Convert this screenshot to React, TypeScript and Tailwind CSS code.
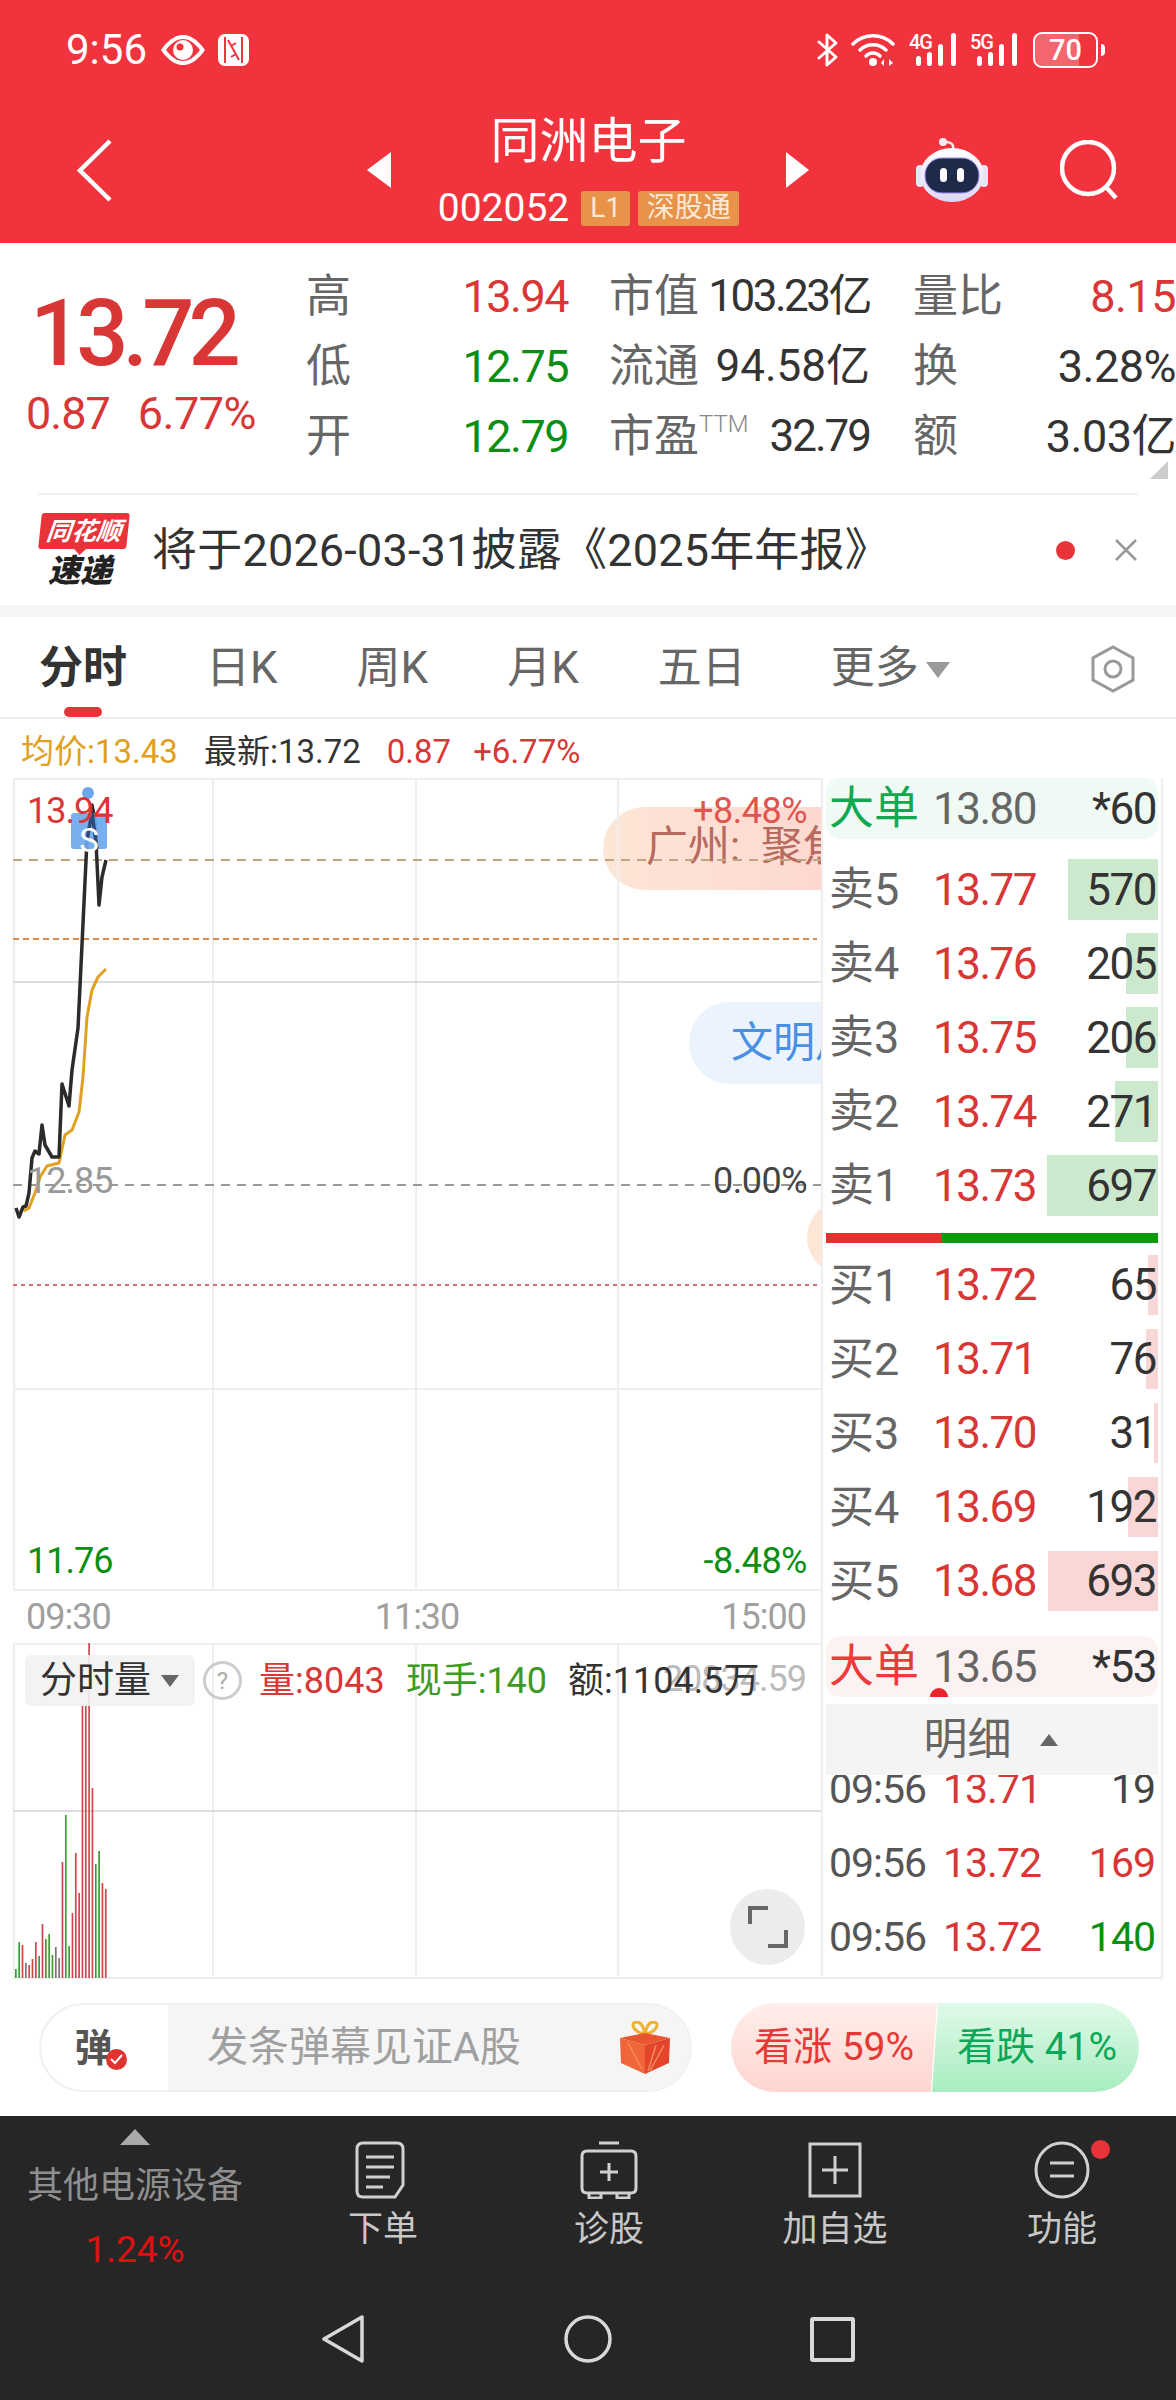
import React from 'react';

const FONT = "[font-family:Roboto,'Noto_Sans_CJK_SC',sans-serif]";

const stats = [
  { a: '高', av: '13.94', ac: 'text-[#d93636]', b: '市值', bv: '103.23亿', bt: 'tracking-[-2.5px]', c: '量比', cv: '8.15', cc: 'text-[#d93636]' },
  { a: '低', av: '12.75', ac: 'text-[#0a8f14]', b: '流通', bv: '94.58亿', bt: 'tracking-normal', c: '换', cv: '3.28%', cc: 'text-[#333]' },
  { a: '开', av: '12.79', ac: 'text-[#0a8f14]', b: '市盈', bv: '32.79', bt: 'tracking-[-2px]', c: '额', cv: '3.03亿', cc: 'text-[#333]', ttm: true },
];

const sells = [
  { label: '卖5', price: '13.77', qty: '570', bar: 90 },
  { label: '卖4', price: '13.76', qty: '205', bar: 32 },
  { label: '卖3', price: '13.75', qty: '206', bar: 32 },
  { label: '卖2', price: '13.74', qty: '271', bar: 43 },
  { label: '卖1', price: '13.73', qty: '697', bar: 111 },
];

const buys = [
  { label: '买1', price: '13.72', qty: '65', bar: 10 },
  { label: '买2', price: '13.71', qty: '76', bar: 12 },
  { label: '买3', price: '13.70', qty: '31', bar: 4 },
  { label: '买4', price: '13.69', qty: '192', bar: 30 },
  { label: '买5', price: '13.68', qty: '693', bar: 110 },
];

const ticks = [
  { time: '09:56', price: '13.71', qty: '19', color: 'text-[#444]' },
  { time: '09:56', price: '13.72', qty: '169', color: 'text-[#d93636]' },
  { time: '09:56', price: '13.72', qty: '140', color: 'text-[#0a8f14]' },
];

const priceLine =
  '16,1208 19,1217 23,1207 26,1206 29,1193 32,1158 35,1151 39,1154 42,1125 45,1145 52,1157 59,1157 62,1084 69,1106 72,1070 78,1028 87,840 92,805 95,820 99,905 102,877 106,860';
const avgLine =
  '24,1211 29,1208 35,1193 40,1177 47,1166 59,1163 65,1135 72,1130 79,1112 83,1077 87,1017 92,990 98,977 106,969';

// [colour, top y] from left to right
const volumes: [string, number][] = [
  ['g', 1969], ['g', 1942], ['r', 1945], ['n', 1963], ['r', 1965], ['r', 1959], ['r', 1942],
  ['g', 1956], ['r', 1924], ['g', 1939], ['g', 1934], ['g', 1955], ['n', 1947], ['n', 1958],
  ['r', 1862], ['g', 1815], ['g', 1946], ['r', 1913], ['r', 1853], ['r', 1893], ['r', 1706],
  ['r', 1706], ['r', 1643], ['r', 1788], ['g', 1864], ['g', 1851], ['r', 1883], ['r', 1889],
];
const volColor: Record<string, string> = { g: '#3f9a35', r: '#cf4650', n: '#777777' };

function StatusIcons() {
  return (
    <div className="flex items-center">
      <svg width="22" height="34" viewBox="0 0 22 34" fill="none" stroke="#fff" strokeWidth="3" strokeLinecap="round" strokeLinejoin="round">
        <path d="M2 9 L19 24 L10 32 L10 2 L19 10 L2 25" />
      </svg>
      <svg className="ml-[12px]" width="46" height="34" viewBox="0 0 46 34" fill="none" stroke="#fff" strokeWidth="3.5" strokeLinecap="round">
        <path d="M2 11 C13 0 31 0 42 11" />
        <path d="M9 17 C16 10 28 10 35 17" />
        <path d="M15 23 C19 19 25 19 29 23" />
        <circle cx="22" cy="29" r="4" fill="#fff" stroke="none" />
        <path d="M33 26 L30 30 L33 33 Z M38 26 L42 30 L38 33 Z" fill="#fff" stroke="none" />
      </svg>
      <Signal label="4G" className="ml-[12px]" />
      <Signal label="5G" className="ml-[11px]" />
      <div className="relative ml-[13px] flex h-[36px] w-[65px] items-center justify-center overflow-hidden rounded-[9px] border-[2px] border-white">
        <div className="absolute left-0 top-0 h-full w-[44px] bg-white/25" />
        <span className="relative text-[29px] font-medium leading-none text-white">70</span>
      </div>
      <div className="ml-[3px] h-[12px] w-[4px] rounded-r-sm bg-white" />
    </div>
  );
}

function Signal({ label, className }: { label: string; className: string }) {
  return (
    <svg className={className} width="50" height="34" viewBox="0 0 50 34" fill="#fff">
      <text x="0" y="16" fontSize="20" fontWeight="500" letterSpacing="-1" fontFamily="Roboto, sans-serif">{label}</text>
      <rect x="7" y="23" width="5" height="10" rx="2.5" />
      <rect x="18" y="19" width="5" height="14" rx="2.5" />
      <rect x="29" y="11" width="5" height="22" rx="2.5" />
      <rect x="42" y="0" width="5" height="33" rx="2.5" />
    </svg>
  );
}

function Robot() {
  return (
    <svg width="72" height="66" viewBox="0 0 72 66">
      <defs>
        <linearGradient id="shell" x1="0" y1="0" x2="0" y2="1">
          <stop offset="0" stopColor="#ffffff" />
          <stop offset="1" stopColor="#dcd8f5" />
        </linearGradient>
      </defs>
      <path d="M37 12 C38 7 35 5 29 5" fill="none" stroke="#f3e9ee" strokeWidth="2.5" />
      <circle cx="27" cy="5" r="4" fill="#f6eef1" />
      <rect x="0" y="28" width="8" height="22" rx="4" fill="#e9e5f5" />
      <rect x="64" y="28" width="8" height="22" rx="4" fill="#e9e5f5" />
      <ellipse cx="36" cy="38" rx="32" ry="27" fill="url(#shell)" />
      <rect x="9" y="21" width="54" height="35" rx="17" fill="#1e2a4a" stroke="#9d8cf0" strokeWidth="1" />
      <rect x="24" y="31" width="7" height="14" rx="3.5" fill="#fff" />
      <rect x="41" y="31" width="7" height="14" rx="3.5" fill="#fff" />
    </svg>
  );
}

function Header() {
  return (
    <header className="h-[243px] bg-[#f1333d] text-white">
      <div className="flex h-[100px] items-center justify-between pl-[66px] pr-[71px]">
        <div className="flex items-center">
          <span className="text-[42px] leading-none">9:56</span>
          <svg className="ml-[13px]" width="46" height="32" viewBox="0 0 46 32">
            <path d="M1 16 C10 3 18 1 23 1 C28 1 36 3 45 16 C36 29 28 31 23 31 C18 31 10 29 1 16 Z M6 16 C12 24 18 27 23 27 C28 27 34 24 40 16 C34 8 28 5 23 5 C18 5 12 8 6 16 Z" fill="#fff" fillRule="evenodd" />
            <circle cx="23" cy="16" r="10" fill="#fff" />
            <circle cx="20" cy="13" r="3.5" fill="#f1333d" />
          </svg>
          <svg className="ml-[12px]" width="31" height="32" viewBox="0 0 31 32">
            <rect width="31" height="32" rx="7" fill="#fff" />
            <path d="M7 3 V29 M24 3 V29 M10 6 L21 26 M13 12 L18 9 M13 23 L18 20" stroke="#f1333d" strokeWidth="2" fill="none" />
          </svg>
        </div>
        <StatusIcons />
      </div>
      <div className="flex h-[140px] items-center">
        <svg className="ml-[77px]" width="35" height="63" viewBox="0 0 35 63" fill="none" stroke="#fff" strokeWidth="4.5">
          <path d="M33 2 L3 31.5 L33 61" />
        </svg>
        <div className="ml-[255px] h-0 w-0 border-y-[18px] border-r-[24px] border-y-transparent border-r-white" />
        <div className="flex w-[395px] flex-col items-center">
          <div className="text-[49px] leading-[56px]">同洲电子</div>
          <div className="mt-[20px] flex items-center">
            <span className="text-[39px] leading-[36px]">002052</span>
            <span className="ml-[12px] flex h-[35px] w-[49px] items-center justify-center rounded-[3px] bg-[#e8924a] text-[28px] text-[#fde9d6]">L1</span>
            <span className="ml-[8px] flex h-[35px] w-[101px] items-center justify-center rounded-[3px] bg-[#e8924a] text-[28px] text-[#fde9d6]">深股通</span>
          </div>
        </div>
        <div className="h-0 w-0 border-y-[18px] border-l-[23px] border-y-transparent border-l-white" />
        <div className="ml-[107px]">
          <Robot />
        </div>
        <svg className="ml-[72px]" width="59" height="60" viewBox="0 0 59 60" fill="none" stroke="#fff" strokeWidth="4.5">
          <circle cx="28" cy="28" r="26" />
          <path d="M46 47 L56 58" />
        </svg>
      </div>
    </header>
  );
}

function Quote() {
  return (
    <section className="relative flex h-[250px]">
      <div className="flex w-[306px] flex-col pl-[26px] pt-[38px]">
        <div className="pl-[4px] text-[92px] font-medium leading-[106px] tracking-[-6px] text-[#d93636]">13.72</div>
        <div className="mt-[2px] flex text-[45px] leading-[50px] tracking-[-1px] text-[#d93636]">
          <span>0.87</span>
          <span className="ml-[28px] tracking-[-0.5px]">6.77%</span>
        </div>
      </div>
      <div className="pt-[18px]">
        {stats.map((s) => (
          <div key={s.a} className="grid h-[70px] grid-cols-[262px_41px_261px_43px_263px] items-center whitespace-nowrap text-[45px] leading-none tracking-[-1.5px]">
            <div className="flex justify-between">
              <span className="tracking-normal text-[#666]">{s.a}</span>
              <span className={s.ac}>{s.av}</span>
            </div>
            <div />
            <div className="flex items-center justify-between">
              <span className="flex tracking-normal text-[#666]">
                {s.b}
                {s.ttm && <span className="mt-[-2px] text-[24px] font-light text-[#888]">TTM</span>}
              </span>
              <span className={`text-[44px] text-[#333] ${s.bt}`}>{s.bv}</span>
            </div>
            <div />
            <div className="flex items-center justify-between">
              <span className="tracking-normal text-[#666]">{s.c}</span>
              <span className={`tracking-[-0.5px] ${s.cc}`}>{s.cv}</span>
            </div>
          </div>
        ))}
      </div>
      <div className="absolute bottom-[14px] right-[8px] h-0 w-0 border-b-[18px] border-l-[18px] border-b-[#cccccc] border-l-transparent" />
    </section>
  );
}

function News() {
  return (
    <section className="mx-[38px] flex h-[112px] items-center border-t-[2px] border-[#f0f0f0]">
      <div className="ml-[2px] flex w-[88px] flex-col items-center">
        <div className="relative flex h-[36px] w-[88px] -skew-x-6 items-center justify-center rounded-[3px] bg-[#e8333a] text-[25px] font-bold italic leading-none text-white">
          同花顺
          <span className="absolute bottom-[-6px] left-[36px] h-0 w-0 border-x-[6px] border-t-[6px] border-x-transparent border-t-[#e8333a]" />
        </div>
        <div className="mt-[6px] pr-[8px] text-[32px] font-black italic leading-[32px] text-[#222]">速递</div>
      </div>
      <div className="ml-[24px] text-[45px] leading-none tracking-[0.2px] text-[#333]">将于2026-03-31披露《2025年年报》</div>
      <div className="ml-auto h-[19px] w-[19px] rounded-full bg-[#e8333a]" />
      <svg className="ml-[39px]" width="24" height="24" viewBox="0 0 24 24" fill="none" stroke="#999" strokeWidth="2.5">
        <path d="M2 2 L22 22 M22 2 L2 22" />
      </svg>
    </section>
  );
}

function Tabs() {
  return (
    <nav className="relative flex h-[102px] items-center gap-[79px] border-b-[2px] border-[#eeeeee] pt-[2px] pl-[39px] text-[44px] leading-none text-[#666]">
      <span className="font-bold text-[#333]">分时</span>
      <span>日K</span>
      <span>周K</span>
      <span>月K</span>
      <span>五日</span>
      <span className="ml-[6px] flex items-center">
        更多
        <span className="ml-[7px] mt-[4px] h-0 w-0 border-x-[12px] border-t-[16px] border-x-transparent border-t-[#999]" />
      </span>
      <svg className="absolute right-[38px] top-[27px]" width="50" height="50" viewBox="0 0 50 50" fill="none" stroke="#999" strokeWidth="3">
        <path d="M25 3 L45 14 V36 L25 47 L5 36 V14 Z" />
        <circle cx="25" cy="25" r="8" />
      </svg>
      <div className="absolute bottom-0 left-[64px] h-[10px] w-[38px] rounded-full bg-[#e8333a]" />
    </nav>
  );
}

function PriceChart() {
  return (
    <div className="relative h-[813px] overflow-hidden text-[36px] leading-none tracking-[-0.5px]">
      <div className="absolute left-[590px] top-[29px] h-[83px] w-[300px] whitespace-pre rounded-full bg-gradient-to-r from-[#fde6d6] to-[#fdd3cf] pl-[43px] pt-[19px] text-[42px] tracking-normal text-[#b86a5e]">广州:  聚焦</div>
      <div className="absolute left-[676px] top-[224px] h-[82px] w-[300px] rounded-full bg-[#ebf3fd] pl-[42px] pt-[20px] text-[42px] tracking-normal text-[#4a90e2]">文明用语</div>
      <div className="absolute left-[794px] top-[422px] h-[75px] w-[300px] rounded-full bg-[#fde6d6]" />
      <svg className="absolute inset-0" width="808" height="813" viewBox="13 778 808 813" fill="none">
        <path d="M14 778 V1591 M213 778 V1591 M416 778 V1591 M618 778 V1591" stroke="#eeeeee" strokeWidth="2" />
        <path d="M13 779 H821 M13 1590 H821 M13 1389 H821" stroke="#eeeeee" strokeWidth="2" />
        <path d="M13 982 H821" stroke="#dddddd" strokeWidth="2" />
        <path d="M13 860 H821" stroke="#bda77f" strokeWidth="2" strokeDasharray="9 7" />
        <path d="M13 939 H817" stroke="#e08a45" strokeWidth="2" strokeDasharray="6 4" />
        <path d="M13 1185 H821" stroke="#999999" strokeWidth="2" strokeDasharray="9 7" />
        <path d="M13 1285 H821" stroke="#e06a70" strokeWidth="2" strokeDasharray="4 4" />
        <polyline points={avgLine} stroke="#e0a020" strokeWidth="3" strokeLinejoin="round" />
        <polyline points={priceLine} stroke="#2b2b2b" strokeWidth="3.5" strokeLinejoin="round" />
        <circle cx="88" cy="793" r="6" fill="#6ea7ee" />
        <rect x="71" y="813" width="36" height="36" rx="3" fill="#6ea7ee" fillOpacity="0.92" />
        <polyline points="87,840 92,813 97,849" stroke="#2b4a78" strokeWidth="3.5" />
      </svg>
      <span className="absolute left-[58px] top-[46px] w-[36px] text-center text-[33px] tracking-normal text-white">S</span>
      <span className="absolute left-[14px] top-[15px] tracking-[-1px] text-[#d93636]">13.94</span>
      <span className="absolute left-[14px] top-[385px] tracking-[-1px] text-[#999]">12.85</span>
      <span className="absolute left-[4px] bottom-[12px] pl-[10px] tracking-[-1px] text-[#0a8f14]">11.76</span>
      <span className="absolute right-[14px] top-[15px] text-[#e0544e]">+8.48%</span>
      <span className="absolute right-[14px] top-[385px] text-[#444]">0.00%</span>
      <span className="absolute right-[14px] bottom-[12px] text-[#0a8f14]">-8.48%</span>
    </div>
  );
}

function VolumeChart() {
  return (
    <div className="relative h-[336px] overflow-hidden">
      <svg className="absolute inset-0" width="808" height="336" viewBox="13 1643 808 336" fill="none">
        <path d="M14 1643 V1979 M213 1643 V1979 M416 1643 V1979 M618 1643 V1979" stroke="#eeeeee" strokeWidth="2" />
        <path d="M13 1644 H821 M13 1978 H821" stroke="#eeeeee" strokeWidth="2" />
        <path d="M13 1811 H821" stroke="#dddddd" strokeWidth="2" />
        {volumes.map(([c, top], i) => (
          <rect key={i} x={15 + i * 3.33} y={top} width="1.7" height={1978 - top} fill={volColor[c]} />
        ))}
      </svg>
      <span className="absolute right-[15px] top-[16px] text-[36px] leading-[40px] tracking-[-1px] text-[#bbb]">20834.59</span>
      <div className="absolute left-[12px] top-[12px] flex h-[51px] w-[170px] items-center rounded-[6px] bg-[#f2f2f2]/90 pl-[15px] text-[37px] leading-none text-[#333]">
        分时量
        <span className="ml-[10px] h-0 w-0 border-x-[9px] border-t-[12px] border-x-transparent border-t-[#666]" />
      </div>
      <div className="absolute left-[190px] top-[18px] flex h-[39px] w-[39px] items-center justify-center rounded-full border-[3px] border-[#ccc] text-[24px] leading-none text-[#aaa]">?</div>
      <div className="absolute left-[246px] top-[16px] flex h-[43px] items-center text-[36px] leading-none">
        <span className="text-[#d93636]">量:8043</span>
        <span className="ml-[21px] text-[#3c9a28]">现手:140</span>
        <span className="ml-[21px] text-[#333]">额:1104.5万</span>
      </div>
      <div className="absolute left-[717px] top-[246px] flex h-[76px] w-[75px] items-center justify-center rounded-full bg-[#ececec]">
        <svg width="40" height="42" viewBox="0 0 40 42" fill="none" stroke="#666" strokeWidth="4">
          <path d="M20 2 H2 V18 M20 40 H38 V24" />
        </svg>
      </div>
    </div>
  );
}

function BookRow({ label, price, qty, bar, barColor, tall }: { label: string; price: string; qty: string; bar: number; barColor: string; tall: boolean }) {
  return (
    <div className={`relative flex items-center text-[44px] leading-none tracking-[-1.5px] ${tall ? 'h-[61px]' : 'h-[60px]'}`}>
      <div className={`absolute inset-y-0 right-0 ${barColor}`} style={{ width: bar }} />
      <span className="relative ml-[3px] w-[104px] text-[45px] tracking-normal text-[#666]">{label}</span>
      <span className="relative text-[#d93636]">{price}</span>
      <span className="relative ml-auto mr-[2px] text-[#333]">{qty}</span>
    </div>
  );
}

function BigOrder({ price, qty, tint, color }: { price: string; qty: string; tint: string; color: string }) {
  return (
    <div className={`relative flex h-[61px] items-center overflow-hidden rounded-[14px] text-[44px] leading-none tracking-[-1.5px] ${tint}`}>
      <span className={`ml-[3px] w-[104px] text-[45px] tracking-normal ${color}`}>大单</span>
      <span className="text-[#666]">{price}</span>
      <span className="ml-auto mr-[2px] text-[#333]">{qty}</span>
    </div>
  );
}

function OrderBook() {
  return (
    <aside className="flex w-[342px] flex-col border-x-[2px] border-b-[2px] border-[#eeeeee] px-[3px] text-[#333]">
      <BigOrder price="13.80" qty="*60" tint="bg-[#f0faf4]" color="text-[#10a850]" />
      <div className="mt-[20px] flex flex-col gap-[13px]">
        {sells.map((r) => (
          <BookRow key={r.label} {...r} barColor="bg-[#cde9cd]" tall />
        ))}
      </div>
      <div className="mt-[17px] flex h-[10px]">
        <div className="w-[116px] bg-[#e53030]" />
        <div className="flex-1 bg-[#0a9a0a]" />
      </div>
      <div className="mt-[12px] flex flex-col gap-[14px]">
        {buys.map((r) => (
          <BookRow key={r.label} {...r} barColor="bg-[#f9d7d7]" tall={false} />
        ))}
      </div>
      <div className="relative mt-[25px]">
        <BigOrder price="13.65" qty="*53" tint="bg-[#fdf2f2]" color="text-[#ee3a3a]" />
        <div className="absolute bottom-[-9px] left-[104px] h-[18px] w-[18px] rounded-full bg-[#e8242c] [clip-path:inset(0_0_50%_0)]" />
      </div>
      <div className="mt-[7px] flex h-[71px] items-center justify-center bg-[#f4f4f4] pr-[3px] text-[44px] leading-none text-[#666]">
        明细
        <span className="ml-[28px] h-0 w-0 border-x-[9px] border-b-[12px] border-x-transparent border-b-[#666]" />
      </div>
      <div className="h-[201px] overflow-hidden">
        <div className="-mt-[23px]">
          {ticks.map((t, i) => (
            <div key={i} className="flex h-[74px] items-center text-[41px] leading-none tracking-[-1px]">
              <span className="ml-[3px] w-[114px] text-[#555]">{t.time}</span>
              <span className="text-[#d93636]">{t.price}</span>
              <span className={`ml-auto mr-[3px] ${t.color}`}>{t.qty}</span>
            </div>
          ))}
        </div>
      </div>
    </aside>
  );
}

function CommentBar() {
  return (
    <section className="flex h-[137px] items-start pl-[39px] pt-[24px]">
      <div className="flex h-[89px] w-[653px] overflow-hidden rounded-full border-[2px] border-[#f0f0f0]">
        <div className="relative flex w-[127px] items-center justify-center pr-[22px] text-[38px] font-bold leading-none text-[#555]">
          弹
          <span className="absolute left-[65px] top-[44px] flex h-[21px] w-[21px] items-center justify-center rounded-full bg-[#e0332f]">
            <svg width="13" height="11" viewBox="0 0 13 11" fill="none" stroke="#fff" strokeWidth="2">
              <path d="M1 5 L5 9 L12 1" />
            </svg>
          </span>
        </div>
        <div className="flex flex-1 items-center bg-[#f5f5f5] pl-[39px] text-[41px] leading-none text-[#a0a0a0]">
          发条弹幕见证A股
          <svg className="ml-[99px]" width="50" height="54" viewBox="0 0 50 54">
            <path d="M24 13 C12 10 10 1 17 1 C22 1 24 8 25 13 C26 8 28 1 33 1 C40 1 38 10 26 13" fill="none" stroke="#f0b030" strokeWidth="3" />
            <path d="M0 17 L25 24 V53 L1 42 Z" fill="#f0653a" />
            <path d="M50 17 L25 24 V53 L49 42 Z" fill="#e2452b" />
            <path d="M0 17 L25 12 L50 17 L25 24 Z" fill="#e8552f" />
            <path d="M8 22 L22 48 M36 24 L28 50 M44 24 L30 50" stroke="#f58a5a" strokeWidth="1.5" fill="none" />
          </svg>
        </div>
      </div>
      <div className="ml-[39px] flex h-[89px] w-[408px]">
        <div className="flex w-[206px] items-center rounded-l-full bg-gradient-to-b from-[#ffeeea] to-[#ffd5d0] pl-[23px] text-[39px] leading-none text-[#e53935] [clip-path:polygon(0_0,100%_0,97%_100%,0_100%)]">看涨 59%</div>
        <div className="-ml-[5px] flex w-[207px] items-center rounded-r-full bg-gradient-to-b from-[#e0fae8] to-[#a8ecc0] pl-[25px] text-[39px] leading-none text-[#0aa858] [clip-path:polygon(3%_0,100%_0,100%_100%,0_100%)]">看跌 41%</div>
      </div>
    </section>
  );
}

function BottomBar() {
  return (
    <footer className="h-[284px] bg-[#262626]">
      <div className="grid h-[180px] grid-cols-[270px_226px_226px_226px_228px]">
        <div className="flex flex-col items-center pt-[13px]">
          <div className="h-0 w-0 border-x-[15px] border-b-[16px] border-x-transparent border-b-[#aaa]" />
          <div className="mt-[21px] text-[36px] leading-[40px] text-[#8f8f8f]">其他电源设备</div>
          <div className="mt-[24px] text-[37px] leading-[40px] text-[#e01010]">1.24%</div>
        </div>
        <TabIcon label="下单">
          <path d="M4 8 Q4 2 10 2 H44 Q50 2 50 8 V44 L42 56 H10 Q4 56 4 50 Z M13 16 H41 M13 26 H41 M13 36 H37 M13 46 H30" />
        </TabIcon>
        <TabIcon label="诊股">
          <path d="M20 2 H40 M8 10 H52 Q57 10 57 15 V47 Q57 52 52 52 H8 Q3 52 3 47 V15 Q3 10 8 10 Z M30 22 V40 M21 31 H39 M10 52 V57 H22 V52 M38 52 V57 H50 V52" />
        </TabIcon>
        <TabIcon label="加自选">
          <path d="M5 3 H55 V55 H5 Z M30 15 V43 M17 29 H43" />
        </TabIcon>
        <TabIcon label="功能" dot>
          <path d="M30 2 C44 2 56 14 56 29 C56 44 44 56 30 56 C16 56 4 44 4 29 C4 14 16 2 30 2 Z M18 22 H42 M18 35 H42" />
        </TabIcon>
      </div>
      <div className="flex pl-[322px] pt-[19px]">
        <svg width="42" height="48" viewBox="0 0 42 48" fill="none" stroke="#d8d8d8" strokeWidth="3.5" strokeLinejoin="round">
          <path d="M40 2 V46 L2 24 Z" />
        </svg>
        <svg className="ml-[200px]" width="48" height="48" viewBox="0 0 48 48" fill="none" stroke="#d8d8d8" strokeWidth="3.5">
          <circle cx="24" cy="24" r="22" />
        </svg>
        <div className="ml-[198px] mt-[2px] h-[45px] w-[45px] rounded-[3px] border-[4px] border-[#d8d8d8]" />
      </div>
    </footer>
  );
}

function TabIcon({ label, dot, children }: { label: string; dot?: boolean; children: React.ReactNode }) {
  return (
    <div className="flex flex-col items-center pt-[25px]">
      <div className="relative h-[58px] w-[60px]">
        <svg width="60" height="58" viewBox="0 0 60 58" fill="none" stroke="#d0d0d0" strokeWidth="3">
          {children}
        </svg>
        {dot && <span className="absolute left-[59px] top-[-1px] h-[19px] w-[19px] rounded-full bg-[#e8333a]" />}
      </div>
      <span className="mt-[11px] text-[35px] leading-[40px] text-[#c8c8c8]">{label}</span>
    </div>
  );
}

export default function App() {
  return (
    <div className={`h-[2400px] w-[1176px] overflow-hidden bg-white ${FONT}`}>
      <Header />
      <Quote />
      <News />
      <div className="h-[12px] bg-[#f5f5f5]" />
      <Tabs />
      <div className="flex h-[59px] items-center pl-[21px] pt-[6px] text-[33px] leading-none">
        <span className="text-[#e0a020]">均价:13.43</span>
        <span className="ml-[26px] text-[#333]">最新:13.72</span>
        <span className="ml-[26px] text-[#d93636]">0.87</span>
        <span className="ml-[22px] text-[#d93636]">+6.77%</span>
      </div>
      <main className="flex pl-[13px]">
        <div className="w-[808px]">
          <PriceChart />
          <div className="flex h-[52px] items-center justify-between pl-[13px] pr-[15px] text-[36px] leading-none tracking-[-1px] text-[#a0a0a0]">
            <span>09:30</span>
            <span className="ml-[2px]">11:30</span>
            <span>15:00</span>
          </div>
          <VolumeChart />
        </div>
        <OrderBook />
      </main>
      <CommentBar />
      <BottomBar />
    </div>
  );
}
